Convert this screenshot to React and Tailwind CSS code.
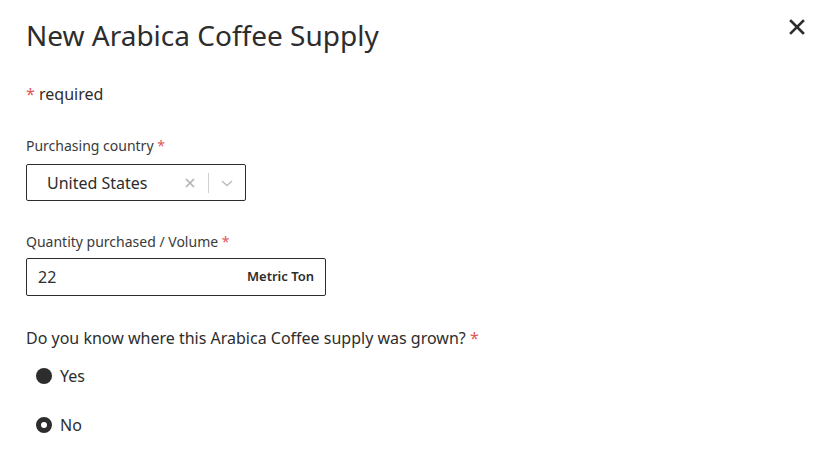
import React, { useState } from 'react';

const Req = () => <span className="text-[#e0565b]"> *</span>;

const Radio = ({ checked, label, onClick }) => (
  <label onClick={onClick} className="flex items-center gap-[8px] h-[24px] cursor-pointer">
    {checked ? (
      <span className="w-[16px] h-[16px] rounded-full bg-[#2d2d2d]" />
    ) : (
      <span className="w-[16px] h-[16px] rounded-full border-[5px] border-[#2d2d2d] bg-white" />
    )}
    <span className="text-[16px] text-[#2d2d2d]">{label}</span>
  </label>
);

export default function App() {
  const [grown, setGrown] = useState('yes');

  return (
    <div className="w-[828px] h-[459px] bg-white relative text-[#2d2d2d] overflow-hidden font-['Noto_Sans','Open_Sans',sans-serif]">
      <button className="absolute right-[22px] top-[18px] w-[18px] h-[18px] flex items-center justify-center">
        <svg width="16" height="16" viewBox="0 0 16 16" fill="none" stroke="#2d2d2d" strokeWidth="2.6" strokeLinecap="square">
          <path d="M2 2 L14 14 M14 2 L2 14" />
        </svg>
      </button>

      <div className="pl-[26px] pt-[15px]">
        <h1 className="text-[28px] leading-[40px] font-normal text-[#2d2d2d]">New Arabica Coffee Supply</h1>

        <p className="mt-[28px] text-[16px] leading-[22px]">
          <span className="text-[#e0565b]">*</span> required
        </p>

        <div className="mt-[31px]">
          <div className="text-[14px] leading-[20px] text-[#3a3a3a]">Purchasing country<Req /></div>
          <div className="mt-[8px] w-[220px] h-[37px] border border-[#2d2d2d] rounded-[2px] flex items-center">
            <span className="pl-[20px] flex-1 text-[16px] text-[#2d2d2d]">United States</span>
            <svg width="12" height="12" viewBox="0 0 12 12" className="mr-[12px]" stroke="#b3b3b3" strokeWidth="1.7">
              <path d="M2 2 L10 10 M10 2 L2 10" />
            </svg>
            <span className="w-px h-[20px] bg-[#d0d0d0]" />
            <svg width="14" height="10" viewBox="0 0 14 10" className="mx-[11px]" fill="none" stroke="#bdbdbd" strokeWidth="1.6">
              <path d="M2 3 L7 7.5 L12 3" />
            </svg>
          </div>
        </div>

        <div className="mt-[31px]">
          <div className="text-[14px] leading-[20px] text-[#3a3a3a]">Quantity purchased / Volume<Req /></div>
          <div className="mt-[6px] w-[300px] h-[38px] border border-[#2d2d2d] rounded-[2px] flex items-center px-[11px]">
            <span className="flex-1 text-[16px]">22</span>
            <span className="text-[13px] font-semibold text-[#2d2d2d]">Metric Ton</span>
          </div>
        </div>

        <div className="mt-[30px] text-[16px] leading-[24px]">
          Do you know where this Arabica Coffee supply was grown?<Req />
        </div>

        <div className="mt-[14px] pl-[10px] flex flex-col gap-[25px]">
          <Radio checked={grown === 'yes'} label="Yes" onClick={() => setGrown('yes')} />
          <Radio checked={grown === 'no'} label="No" onClick={() => setGrown('no')} />
        </div>
      </div>
    </div>
  );
}
